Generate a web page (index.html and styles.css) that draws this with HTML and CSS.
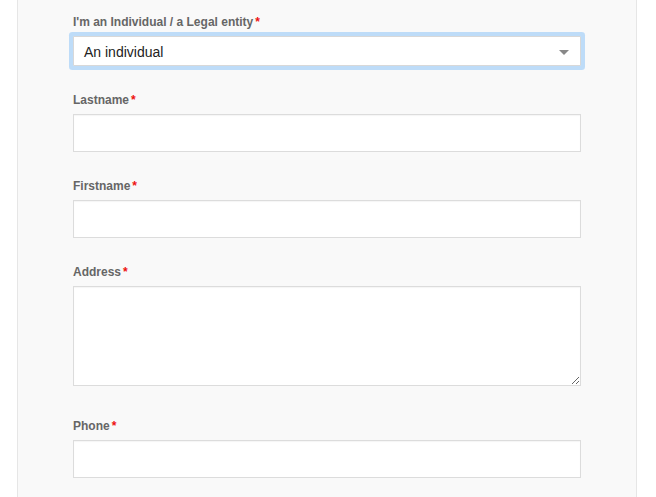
FILE: index.html
```html
<!DOCTYPE html>
<html>
<head>
<meta charset="utf-8">
<link rel="stylesheet" href="styles.css">
</head>
<body>
<div class="panel">
  <form class="form">
    <div class="field">
      <label class="label">I'm an Individual / a Legal entity<span class="req">*</span></label>
      <div class="select focused">
        <span class="select-value">An individual</span>
        <span class="caret"></span>
      </div>
    </div>
    <div class="field">
      <label class="label">Lastname<span class="req">*</span></label>
      <input class="input" type="text">
    </div>
    <div class="field">
      <label class="label">Firstname<span class="req">*</span></label>
      <input class="input" type="text">
    </div>
    <div class="field field-area">
      <label class="label">Address<span class="req">*</span></label>
      <textarea class="textarea"></textarea>
    </div>
    <div class="field">
      <label class="label">Phone<span class="req">*</span></label>
      <input class="input" type="text">
    </div>
  </form>
</div>
</body>
</html>
```

FILE: styles.css
```css
html, body {
  margin: 0;
  padding: 0;
  background: #ffffff;
  font-family: "Liberation Sans", Arial, sans-serif;
}

.panel {
  margin-left: 17px;
  width: 618px;
  min-height: 497px;
  background: #f9f9f9;
  border-left: 1px solid #e6e6e6;
  border-right: 1px solid #e6e6e6;
  box-sizing: content-box;
}

.form {
  padding: 13px 55px 0 55px;
  display: flex;
  flex-direction: column;
  gap: 25px;
}

.field {
  display: flex;
  flex-direction: column;
}

.field-area {
  margin-bottom: 6px;
}

.label {
  font-size: 12px;
  line-height: 18px;
  font-weight: bold;
  color: #666666;
  margin-bottom: 5px;
}

.req {
  color: #ee1111;
  margin-left: 2px;
}

.select {
  box-sizing: border-box;
  height: 30px;
  width: 508px;
  background: #ffffff;
  border: 1px solid #d8d8d8;
  border-radius: 1px;
  display: flex;
  align-items: center;
  justify-content: space-between;
  padding: 2px 10px 0 10px;
}

.select.focused {
  box-shadow: 0 0 0 4px #bedcf8;
}

.select-value {
  font-size: 14px;
  color: #222222;
}

.caret {
  width: 0;
  height: 0;
  border-left: 5px solid transparent;
  border-right: 5px solid transparent;
  border-top: 5px solid #888888;
  margin-right: 1px;
}

.input {
  box-sizing: border-box;
  display: block;
  width: 508px;
  height: 38px;
  margin: 0;
  background: #ffffff;
  border: 1px solid #dcdcdc;
  border-radius: 0;
  box-shadow: inset 0 1px 1px rgba(0, 0, 0, 0.04);
  font-family: inherit;
  font-size: 14px;
  padding: 0 10px;
}

.textarea {
  box-sizing: border-box;
  display: block;
  width: 508px;
  height: 100px;
  margin: 0;
  background: #ffffff;
  border: 1px solid #dcdcdc;
  border-radius: 0;
  box-shadow: inset 0 1px 1px rgba(0, 0, 0, 0.04);
  font-family: inherit;
  font-size: 14px;
  resize: vertical;
}
```
